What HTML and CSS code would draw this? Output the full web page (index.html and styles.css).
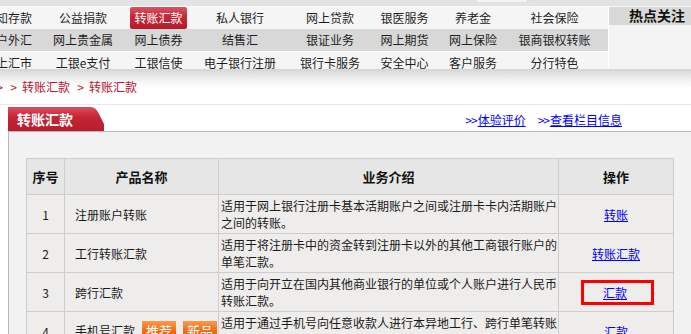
FILE: index.html
```html
<!DOCTYPE html>
<html>
<head>
<meta charset="utf-8">
<title>转账汇款</title>
<link rel="stylesheet" href="styles.css">
</head>
<body>
<div class="topstrip"><span class="topmark"></span></div>
<div class="header">
  <div class="nav">
    <div class="navrow r1">
      <a>通知存款</a><a>公益捐款</a><a class="cur"><span>转账汇款</span></a><a>私人银行</a><a>网上贷款</a><a>银医服务</a><a>养老金</a><a>社会保险</a>
    </div>
    <div class="navrow r2">
      <a>账户外汇</a><a>网上贵金属</a><a>网上债券</a><a>结售汇</a><a>银证业务</a><a>网上期货</a><a>网上保险</a><a>银商银权转账</a>
    </div>
    <div class="navrow r3">
      <a>网上汇市</a><a>工银e支付</a><a>工银信使</a><a>电子银行注册</a><a>银行卡服务</a><a>安全中心</a><a>客户服务</a><a>分行特色</a>
    </div>
  </div>
  <div class="hot"><div class="hot-title">热点关注</div></div>
</div>
<div class="crumb">
  <span class="arr first">&gt;</span><span class="arr">&gt;</span><a class="crumb-link">转账汇款</a><span class="arr">&gt;</span><a class="crumb-link">转账汇款</a>
</div>
<div class="tabrow">
  <div class="tab">转账汇款</div>
  <div class="links">
    <a class="more"><span class="gt">&gt;&gt;</span><span class="u">体验评价</span></a>
    <a class="more"><span class="gt">&gt;&gt;</span><span class="u">查看栏目信息</span></a>
  </div>
</div>
<div class="box">
  <table class="tbl">
    <colgroup><col class="c1"><col class="c2"><col class="c3"><col class="c4"></colgroup>
    <tr>
      <th>序号</th><th>产品名称</th><th>业务介绍</th><th>操作</th>
    </tr>
    <tr>
      <td class="num">1</td>
      <td class="name">注册账户转账</td>
      <td class="intro">适用于网上银行注册卡基本活期账户之间或注册卡卡内活期账户<br>之间的转账。</td>
      <td class="op"><a class="oplink">转账</a></td>
    </tr>
    <tr>
      <td class="num">2</td>
      <td class="name">工行转账汇款</td>
      <td class="intro">适用于将注册卡中的资金转到注册卡以外的其他工商银行账户的<br>单笔汇款。</td>
      <td class="op"><a class="oplink">转账汇款</a></td>
    </tr>
    <tr>
      <td class="num">3</td>
      <td class="name">跨行汇款</td>
      <td class="intro">适用于向开立在国内其他商业银行的单位或个人账户进行人民币<br>转账汇款。</td>
      <td class="op"><span class="mark"><a class="oplink">汇款</a></span></td>
    </tr>
    <tr>
      <td class="num">4</td>
      <td class="name">手机号汇款<span class="badge">推荐</span><span class="badge">新品</span></td>
      <td class="intro">适用于通过手机号向任意收款人进行本异地工行、跨行单笔转账<br>汇款。</td>
      <td class="op"><a class="oplink">汇款</a></td>
    </tr>
  </table>
</div>
</body>
</html>
```

FILE: styles.css
```css
html, body {
  margin: 0;
  padding: 0;
  overflow: hidden;
  background: #fff;
}
body {
  width: 691px;
  height: 334px;
  font-family: "Noto Sans CJK SC", "Noto Sans", sans-serif;
  font-size: 12px;
  color: #222;
}
a {
  color: inherit;
  text-decoration: none;
}

/* top strip */
.topstrip {
  display: flex;
  height: 6px;
  background: #e3e3e3;
  border-bottom: 1px solid #f9f9f9;
}
.topmark {
  margin-left: 477px;
  width: 50px;
  height: 2px;
  background: #f3f3f3;
  border-right: 2px solid #d2ddf0;
}

/* navigation */
.header {
  display: flex;
  height: 62px;
  overflow: hidden;
}
.nav {
  flex: none;
  width: 637px;
  margin-left: -29px;
}
.navrow {
  display: grid;
  grid-template-columns: 74px 76px 75px 88px 92px 57px 80px 83px;
  height: 22px;
  line-height: 22px;
  text-align: center;
  white-space: nowrap;
  color: #1e1e1e;
}
.r1 { background: #f5f5f5; }
.r2 { background: #d8d8d8; }
.r3 { background: #f5f5f5; border-top: 1px solid #fff; }
.cur span {
  display: inline-block;
  width: 57px;
  height: 22px;
  color: #fff;
  border-radius: 2px;
  background: linear-gradient(#da5563, #c42738 45%, #b51b2c);
}
.hot {
  flex: 1;
  background: #f4f4f4;
  border-left: 1px solid #fff;
}
.hot-title {
  height: 18px;
  line-height: 16px;
  padding-left: 20px;
  background: #d9d9d9;
  font-size: 14px;
  font-weight: bold;
  color: #111;
}

/* breadcrumb */
.crumb {
  display: flex;
  height: 35px;
  line-height: 36px;
  background: linear-gradient(#d4d4d4 0, #e4e4e4 5px, #f8f8f8 14px, #fff 20px);
  border-bottom: 1px solid #e6e6e6;
  color: #b8142e;
  white-space: nowrap;
}
.arr {
  display: inline-block;
  width: 7px;
  text-align: center;
  margin-right: 5px;
}
.arr.first { margin-left: -4px; margin-right: 7px; }
.crumb-link { margin-right: 7px; }

/* tab row */
.tabrow {
  display: flex;
  align-items: center;
  height: 24px;
  margin-top: 2px;
}
.tab {
  flex: none;
  margin-left: 8px;
  width: 96px;
  height: 24px;
  line-height: 24px;
  padding-left: 9px;
  box-sizing: border-box;
  color: #fff;
  font-size: 14px;
  font-weight: bold;
  background: linear-gradient(#d9505f 0, #c52637 40%, #b71c2d 100%);
  clip-path: path('M0 0 H82 C87 0 89 3 91 7 L97 19 C99 23 100 24 96 24 H0 Z');
}
.links {
  display: flex;
  gap: 12px;
  margin-left: auto;
  margin-right: 69px;
  color: #0000ff;
  line-height: 20px;
  padding-top: 2px;
}
.more .u { text-decoration: underline; }
.more .gt { letter-spacing: -1px; margin-right: 1px; }

/* content box */
.box {
  margin-left: 8px;
  height: 300px;
  padding: 26px 0 0 17px;
  background: #f2f2f2;
  border-top: 1px solid #b8b8b8;
  border-left: 1px solid #b8b8b8;
}
.tbl {
  border-collapse: collapse;
  table-layout: fixed;
  width: 647px;
}
.c1 { width: 38px; }
.c2 { width: 154px; }
.c3 { width: 340px; }
.c4 { width: 115px; }
.tbl th, .tbl td {
  border: 1px solid #cdcdcd;
  padding: 0;
}
.tbl th {
  height: 35px;
  background: #e6e6e6;
  font-size: 13px;
  font-weight: bold;
  color: #111;
  text-align: center;
}
.tbl td {
  height: 38px;
  background: #eeedeb;
  line-height: 17px;
  vertical-align: middle;
  color: #1a1a1a;
}
.num { text-align: center; }
.name {
  padding-left: 10px !important;
  white-space: nowrap;
}
.intro {
  padding-left: 2px !important;
  white-space: nowrap;
}
.op { text-align: center; }
.oplink {
  color: #0000ff;
  text-decoration: underline;
}
.mark {
  display: inline-block;
  width: 73px;
  height: 25px;
  box-sizing: border-box;
  border: 3px solid #ff0000;
  line-height: 19px;
  padding-left: 19px;
  text-align: left;
  margin-left: 3px;
}
.badge {
  display: inline-block;
  width: 34px;
  height: 20px;
  line-height: 20px;
  margin-left: 7px;
  text-align: center;
  color: #fff;
  font-size: 13px;
  background: linear-gradient(#fb9a4a, #f36a14 50%, #ee5806);
}
```
